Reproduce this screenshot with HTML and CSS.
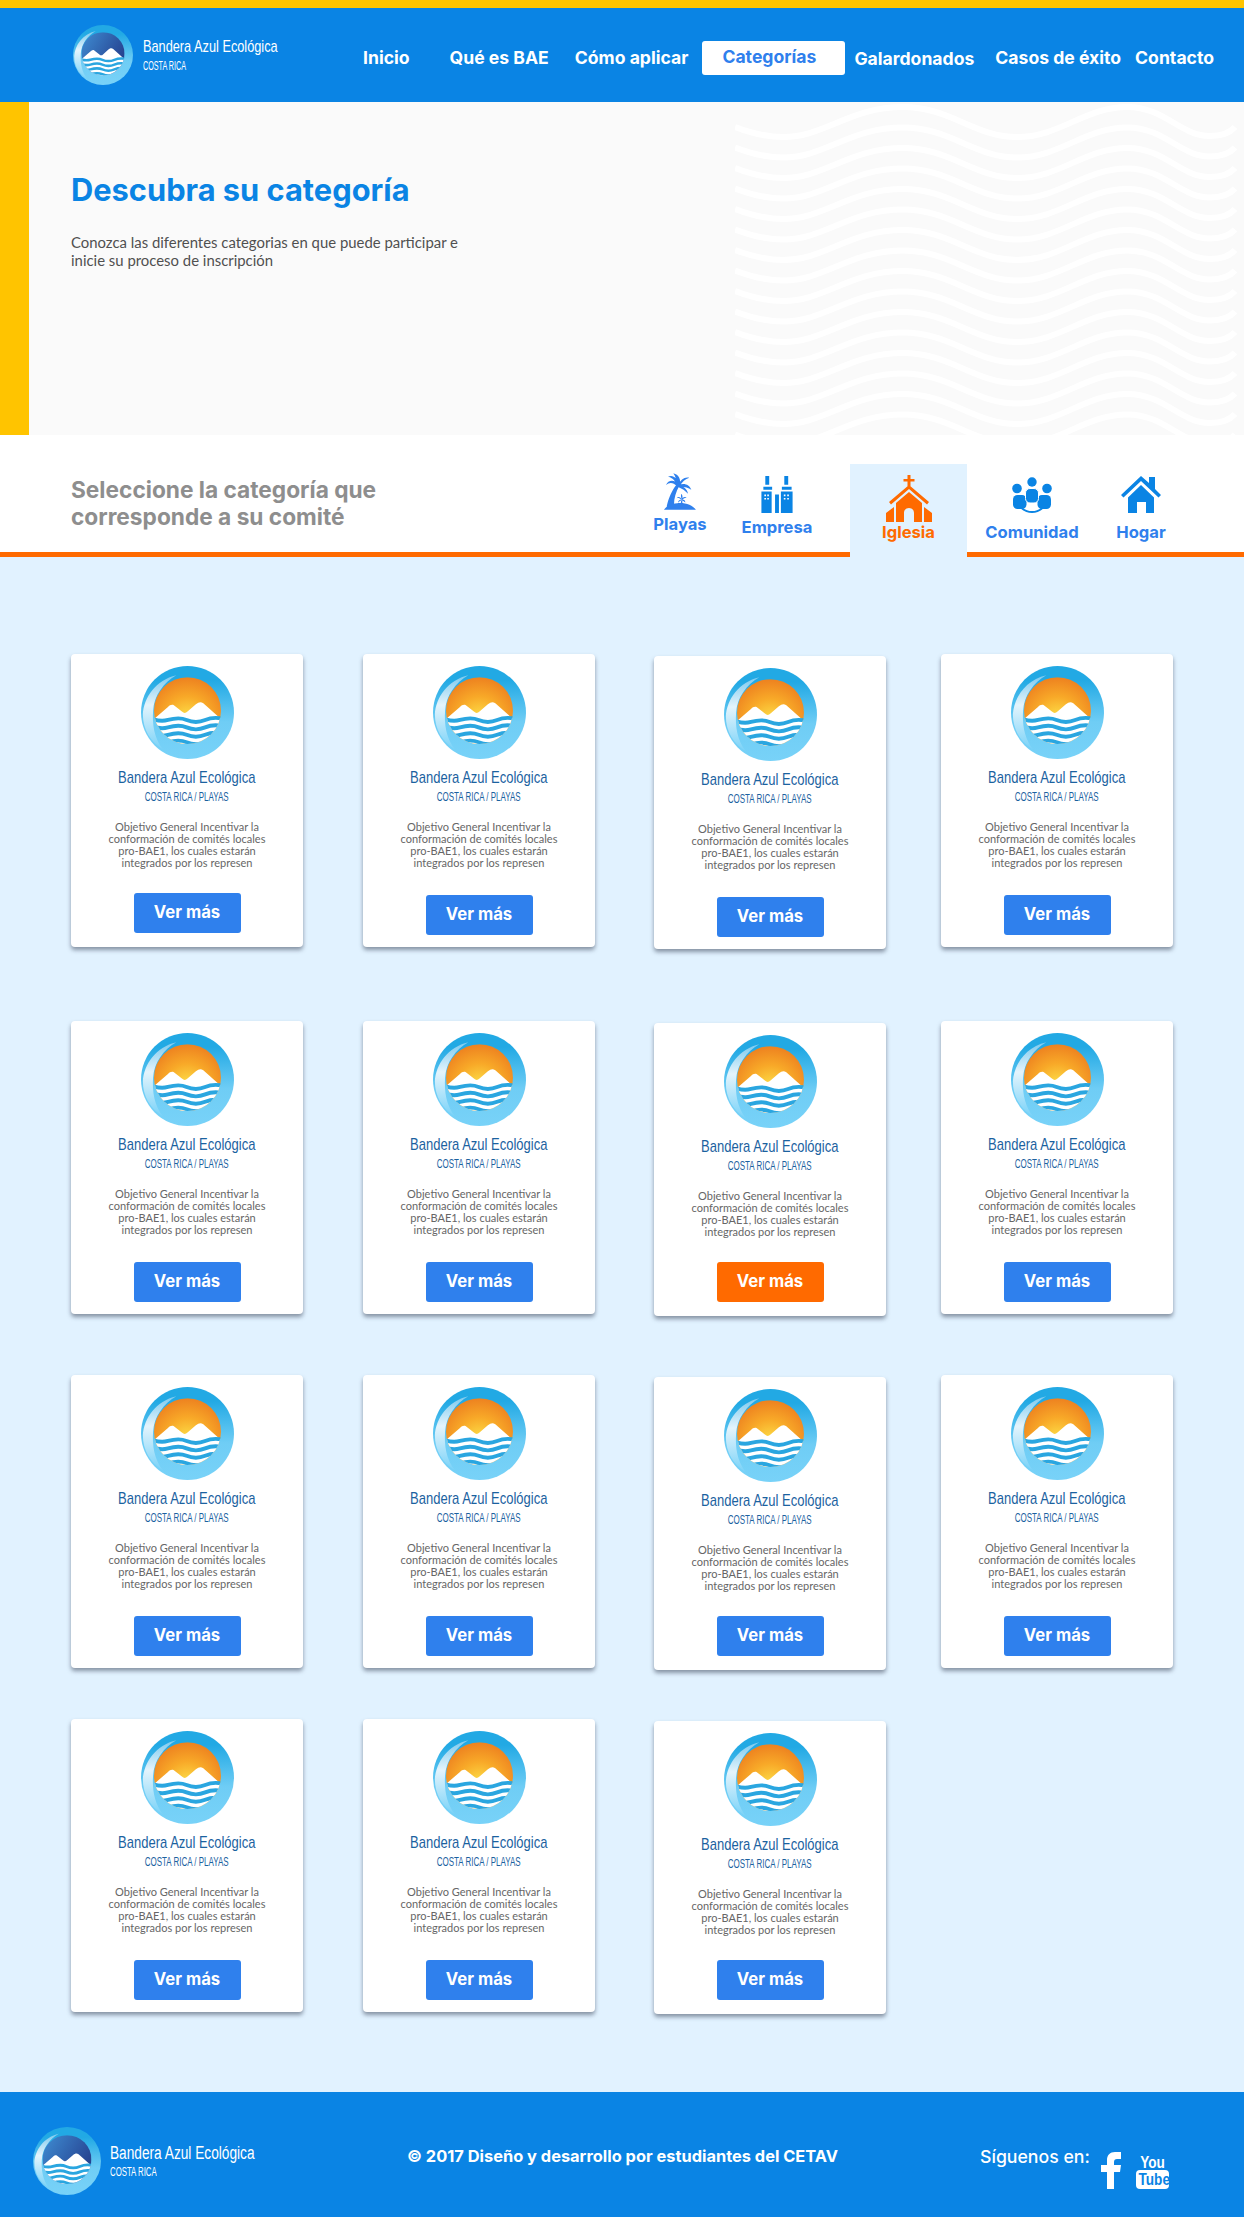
FILE: index.html
```html
<!DOCTYPE html>
<html lang="es">
<head>
    <meta charset="UTF-8">
    <meta name="viewport" content="width=device-width, initial-scale=1.0">
    <title>Categorías - Bandera Azul Ecológica</title>
    <link rel="stylesheet" href="styles.css">
</head>
<body>

    <!-- Simbolos que se repiten -->
    <svg class="defs" width="0" height="0" aria-hidden="true">
        <defs>
            <linearGradient id="ringGrad" x1="0" y1="0" x2="0" y2="1">
                <stop offset="0.15" stop-color="#22a9e4"/>
                <stop offset="0.6" stop-color="#6fcdf5"/>
                <stop offset="1" stop-color="#78d2f8"/>
            </linearGradient>
            <linearGradient id="glowGrad" x1="0" y1="0" x2="0" y2="1">
                <stop offset="0" stop-color="#7cc9ee"/>
                <stop offset="0.4" stop-color="#e4f4fc"/>
                <stop offset="1" stop-color="#78d2f8"/>
            </linearGradient>
            <radialGradient id="sunGrad" cx="0.5" cy="0.62" r="0.6">
                <stop offset="0" stop-color="#fde24a"/>
                <stop offset="0.55" stop-color="#f8a928"/>
                <stop offset="1" stop-color="#ee8420"/>
            </radialGradient>
            <linearGradient id="duskGrad" x1="0" y1="0" x2="1" y2="0.6">
                <stop offset="0" stop-color="#3f8ed4"/>
                <stop offset="1" stop-color="#253f8d"/>
            </linearGradient>
            <clipPath id="discClip">
                <circle cx="50" cy="48" r="36"/>
            </clipPath>

            <g id="markSea">
                <path d="M14 57 29 44c2-2 4-3 6-2l9 7c2 2 4 2 6 0l9-8c3-2 5-3 8-1l19 17v40H14z" fill="#fff"/>
                <g fill="none" stroke="#2aa6e0" stroke-width="4.200">
                    <path d="M10 56c7 3 12 4 19 2s13-3 20 0 13 3 20 0 13-3 21-1"/>
                    <path d="M10 64c7 3 12 4 19 2s13-3 20 0 13 3 20 0 13-3 21-1"/>
                    <path d="M10 72c7 3 12 4 19 2s13-3 20 0 13 3 20 0 13-3 21-1"/>
                    <path d="M10 80c7 3 12 4 19 2s13-3 20 0 13 3 20 0 13-3 21-1"/>
                </g>
            </g>

            <symbol id="markSun" viewBox="0 0 100 100">
                <circle cx="50" cy="50" r="50" fill="url(#ringGrad)"/>
                <path d="M38 10C16 15 3 34 2 52c0 16 8 30 22 38C14 78 12 62 13 48 14 32 24 18 38 10z" fill="url(#glowGrad)"/>
                <g clip-path="url(#discClip)">
                    <rect x="14" y="12" width="72" height="72" fill="url(#sunGrad)"/>
                    <use href="#markSea"/>
                </g>
            </symbol>

            <symbol id="markDusk" viewBox="0 0 100 100">
                <circle cx="50" cy="50" r="50" fill="url(#ringGrad)"/>
                <path d="M38 10C16 15 3 34 2 52c0 16 8 30 22 38C14 78 12 62 13 48 14 32 24 18 38 10z" fill="url(#glowGrad)"/>
                <g clip-path="url(#discClip)">
                    <rect x="14" y="12" width="72" height="72" fill="url(#duskGrad)"/>
                    <use href="#markSea"/>
                </g>
            </symbol>

            <path id="waveLine" d="M0 25C16 31 32 35 48 35 90 35 115 5 168 5 215 5 240 35 282 35 325 35 350 5 392 5 430 5 445 34 475 34 485 34 495 31 500 25" fill="none" stroke="#fff" stroke-width="6"/>
        </defs>
    </svg>

    <header class="topbar">
        <div class="brand brand-top">
            <svg class="brand-mark" viewBox="0 0 100 100"><use href="#markDusk"/></svg>
            <div class="brand-text">
                <span class="brand-name">Bandera Azul Ecológica</span>
                <span class="brand-sub">COSTA RICA</span>
            </div>
        </div>
        <nav class="menu">
            <a class="menu-item menu-inicio" href="#">Inicio</a>
            <a class="menu-item menu-que" href="#">Qué es BAE</a>
            <a class="menu-item menu-como" href="#">Cómo aplicar</a>
            <a class="menu-item menu-active" href="#">Categorías</a>
            <a class="menu-item menu-gal" href="#">Galardonados</a>
            <a class="menu-item menu-casos" href="#">Casos de éxito</a>
            <a class="menu-item" href="#">Contacto</a>
        </nav>
    </header>

    <section class="hero">
        <div class="hero-copy">
            <h1>Descubra su categoría</h1>
            <p>Conozca las diferentes categorias en que puede participar e inicie su proceso de inscripción</p>
        </div>
        <svg class="hero-waves" aria-hidden="true">
            <use href="#waveLine"/>
            <use href="#waveLine" y="20.5"/>
            <use href="#waveLine" y="41"/>
            <use href="#waveLine" y="61.5"/>
            <use href="#waveLine" y="82"/>
            <use href="#waveLine" y="102.5"/>
            <use href="#waveLine" y="123"/>
            <use href="#waveLine" y="143.5"/>
            <use href="#waveLine" y="164"/>
            <use href="#waveLine" y="184.5"/>
            <use href="#waveLine" y="205"/>
            <use href="#waveLine" y="225.5"/>
            <use href="#waveLine" y="246"/>
            <use href="#waveLine" y="266.5"/>
            <use href="#waveLine" y="287"/>
            <use href="#waveLine" y="307.5"/>
        </svg>
    </section>

    <section class="selector">
        <h2>Seleccione la categoría que corresponde a su comité</h2>
        <div class="tabs">
            <a class="tab tab-playas" href="#">
                <svg viewBox="0 0 96 110" width="32" height="37"><path fill="#2f80ed" d="M0 110C8 98 20 92 40 90 65 88 85 96 96 110zM8 100C14 72 24 52 36 36L46 38C36 55 30 75 30 95zM42 38C38 22 34 8 28 0 44 4 52 18 47 37zM40 38C32 20 22 12 12 11 26 3 42 16 45 36zM38 38C28 28 16 26 6 36 12 20 32 18 43 34zM42 36C50 20 62 10 76 14 64 18 54 26 47 39zM44 36C60 28 76 34 82 50 72 42 58 40 46 41zM44 38C58 38 70 48 72 62 64 52 54 46 44 42zM50 93 52 78 55 78 55 92zM53 78C48 70 42 70 38 75 44 74 48 75 52 80zM53 78C50 70 50 66 53 62 56 68 56 74 55 79zM53 78C58 70 64 70 68 74 62 74 58 76 55 80zM53 79C60 78 64 82 64 88 60 84 56 82 53 81zM53 79C46 79 42 84 42 89 46 84 50 82 54 81z"/></svg>
                <span>Playas</span>
            </a>
            <a class="tab tab-empresa" href="#">
                <svg viewBox="0 0 32 38" width="32" height="37"><path fill="#0a84e4" d="M4 0h4v9H4zM23.500 0h4v9h-4zM2 11h9v3H2zM21 11h10v3H21zM0 16h10.500v22H0zM14 19h4v19h-4zM20 16h12v22H20z"/><path fill="#fff" d="M3 19h1.700v1.700H3zM6 19h1.700v1.700H6zM3 22.500h1.700v1.700H3zM6 22.500h1.700v1.700H6zM23 19h1.700v1.700H23zM26.500 19h1.700v1.700h-1.700zM23 22.500h1.700v1.700H23zM26.500 22.500h1.700v1.700h-1.700z"/></svg>
                <span>Empresa</span>
            </a>
            <a class="tab tab-iglesia" href="#">
                <svg viewBox="0 0 46 47" width="46" height="47"><path fill="#ff6a00" d="M21.500 0h3v4h4v2.500h-4V12h-3V6.500h-4V4h4zM23 10 43 27 41 29.500 23 14 5 29.500 3 27zM23 17 36 28v19H28V38c0-3-2-5-5-5s-5 2-5 5v9H10V28zM0 38l8-6v15H0zM46 38l-8-6v15h8z"/></svg>
                <span>Iglesia</span>
            </a>
            <a class="tab tab-comunidad" href="#">
                <svg viewBox="0 0 40 36" width="40" height="36"><g fill="#0a84e4"><circle cx="20" cy="5" r="4.700"/><circle cx="5" cy="11.500" r="4.800"/><circle cx="35" cy="11.500" r="4.800"/><rect x="1" y="18" width="13.500" height="14" rx="4.500"/><rect x="25.500" y="18" width="13.500" height="14" rx="4.500"/><rect x="13.500" y="11.500" width="13" height="14.500" rx="4.500" stroke="#fff"/></g><path fill="none" stroke="#0a84e4" stroke-width="1.800" d="M10 31.500c3 2.500 6.500 3.500 10 3.500s7-1 10-3.500"/></svg>
                <span>Comunidad</span>
            </a>
            <a class="tab tab-hogar" href="#">
                <svg viewBox="0 0 40 37" width="40" height="37"><path fill="#0a84e4" d="M20 0 28 7V1h6v12l6 6-2.500 2.500L20 5 2.500 21.500 0 19zM20 9 33 21.500V37H25V26h-9v11H7V21.500z"/></svg>
                <span>Hogar</span>
            </a>
        </div>
    </section>

    <main class="catalog">
        <div class="card-row row-1">
            <article class="card"><svg class="card-mark" viewBox="0 0 100 100"><use href="#markSun"/></svg><div class="card-brand">Bandera Azul Ecológica</div><div class="card-sub">COSTA RICA / PLAYAS</div><p>Objetivo General Incentivar la conformación de comités locales pro-BAE1, los cuales estarán integrados por los represen</p><a class="btn btn-up" href="#">Ver más</a></article>
            <article class="card"><svg class="card-mark" viewBox="0 0 100 100"><use href="#markSun"/></svg><div class="card-brand">Bandera Azul Ecológica</div><div class="card-sub">COSTA RICA / PLAYAS</div><p>Objetivo General Incentivar la conformación de comités locales pro-BAE1, los cuales estarán integrados por los represen</p><a class="btn" href="#">Ver más</a></article>
            <article class="card card-low"><svg class="card-mark" viewBox="0 0 100 100"><use href="#markSun"/></svg><div class="card-brand">Bandera Azul Ecológica</div><div class="card-sub">COSTA RICA / PLAYAS</div><p>Objetivo General Incentivar la conformación de comités locales pro-BAE1, los cuales estarán integrados por los represen</p><a class="btn" href="#">Ver más</a></article>
            <article class="card card-last"><svg class="card-mark" viewBox="0 0 100 100"><use href="#markSun"/></svg><div class="card-brand">Bandera Azul Ecológica</div><div class="card-sub">COSTA RICA / PLAYAS</div><p>Objetivo General Incentivar la conformación de comités locales pro-BAE1, los cuales estarán integrados por los represen</p><a class="btn" href="#">Ver más</a></article>
        </div>
        <div class="card-row row-2">
            <article class="card"><svg class="card-mark" viewBox="0 0 100 100"><use href="#markSun"/></svg><div class="card-brand">Bandera Azul Ecológica</div><div class="card-sub">COSTA RICA / PLAYAS</div><p>Objetivo General Incentivar la conformación de comités locales pro-BAE1, los cuales estarán integrados por los represen</p><a class="btn" href="#">Ver más</a></article>
            <article class="card"><svg class="card-mark" viewBox="0 0 100 100"><use href="#markSun"/></svg><div class="card-brand">Bandera Azul Ecológica</div><div class="card-sub">COSTA RICA / PLAYAS</div><p>Objetivo General Incentivar la conformación de comités locales pro-BAE1, los cuales estarán integrados por los represen</p><a class="btn" href="#">Ver más</a></article>
            <article class="card card-low"><svg class="card-mark" viewBox="0 0 100 100"><use href="#markSun"/></svg><div class="card-brand">Bandera Azul Ecológica</div><div class="card-sub">COSTA RICA / PLAYAS</div><p>Objetivo General Incentivar la conformación de comités locales pro-BAE1, los cuales estarán integrados por los represen</p><a class="btn btn-up btn-hover" href="#">Ver más</a></article>
            <article class="card card-last"><svg class="card-mark" viewBox="0 0 100 100"><use href="#markSun"/></svg><div class="card-brand">Bandera Azul Ecológica</div><div class="card-sub">COSTA RICA / PLAYAS</div><p>Objetivo General Incentivar la conformación de comités locales pro-BAE1, los cuales estarán integrados por los represen</p><a class="btn" href="#">Ver más</a></article>
        </div>
        <div class="card-row row-3">
            <article class="card"><svg class="card-mark" viewBox="0 0 100 100"><use href="#markSun"/></svg><div class="card-brand">Bandera Azul Ecológica</div><div class="card-sub">COSTA RICA / PLAYAS</div><p>Objetivo General Incentivar la conformación de comités locales pro-BAE1, los cuales estarán integrados por los represen</p><a class="btn" href="#">Ver más</a></article>
            <article class="card"><svg class="card-mark" viewBox="0 0 100 100"><use href="#markSun"/></svg><div class="card-brand">Bandera Azul Ecológica</div><div class="card-sub">COSTA RICA / PLAYAS</div><p>Objetivo General Incentivar la conformación de comités locales pro-BAE1, los cuales estarán integrados por los represen</p><a class="btn" href="#">Ver más</a></article>
            <article class="card card-low"><svg class="card-mark" viewBox="0 0 100 100"><use href="#markSun"/></svg><div class="card-brand">Bandera Azul Ecológica</div><div class="card-sub">COSTA RICA / PLAYAS</div><p>Objetivo General Incentivar la conformación de comités locales pro-BAE1, los cuales estarán integrados por los represen</p><a class="btn btn-up" href="#">Ver más</a></article>
            <article class="card card-last"><svg class="card-mark" viewBox="0 0 100 100"><use href="#markSun"/></svg><div class="card-brand">Bandera Azul Ecológica</div><div class="card-sub">COSTA RICA / PLAYAS</div><p>Objetivo General Incentivar la conformación de comités locales pro-BAE1, los cuales estarán integrados por los represen</p><a class="btn" href="#">Ver más</a></article>
        </div>
        <div class="card-row row-4">
            <article class="card"><svg class="card-mark" viewBox="0 0 100 100"><use href="#markSun"/></svg><div class="card-brand">Bandera Azul Ecológica</div><div class="card-sub">COSTA RICA / PLAYAS</div><p>Objetivo General Incentivar la conformación de comités locales pro-BAE1, los cuales estarán integrados por los represen</p><a class="btn" href="#">Ver más</a></article>
            <article class="card"><svg class="card-mark" viewBox="0 0 100 100"><use href="#markSun"/></svg><div class="card-brand">Bandera Azul Ecológica</div><div class="card-sub">COSTA RICA / PLAYAS</div><p>Objetivo General Incentivar la conformación de comités locales pro-BAE1, los cuales estarán integrados por los represen</p><a class="btn" href="#">Ver más</a></article>
            <article class="card card-low"><svg class="card-mark" viewBox="0 0 100 100"><use href="#markSun"/></svg><div class="card-brand">Bandera Azul Ecológica</div><div class="card-sub">COSTA RICA / PLAYAS</div><p>Objetivo General Incentivar la conformación de comités locales pro-BAE1, los cuales estarán integrados por los represen</p><a class="btn btn-up" href="#">Ver más</a></article>
        </div>
    </main>

    <footer class="site-footer">
        <div class="brand brand-foot">
            <svg class="brand-mark" viewBox="0 0 100 100"><use href="#markDusk"/></svg>
            <div class="brand-text">
                <span class="brand-name">Bandera Azul Ecológica</span>
                <span class="brand-sub">COSTA RICA</span>
            </div>
        </div>
        <div class="copy">© 2017 Diseño y desarrollo por estudiantes del CETAV</div>
        <div class="social">
            <span class="social-label">Síguenos en:</span>
            <svg class="fb" viewBox="0 0 20 37" width="20" height="37"><path fill="#fff" d="M6 37V20H0v-7h6V8c0-5 3-8 8-8h6v7h-4c-2 0-3 1-3 3v3h7l-1 7h-6v17z"/></svg>
            <span class="yt"><span class="yt-you">You</span><span class="yt-tube"><span>Tube</span></span></span>
        </div>
    </footer>

</body>
</html>
```

FILE: styles.css
```css
* {
    box-sizing: border-box;
}
body {
    margin: 0;
    width: 1244px;
    font-family: "Inter", "Liberation Sans", sans-serif;
    background-color: #e1f2ff;
}
a {
    text-decoration: none;
}
.defs {
    display: block;
    height: 0;
}

/* Barra superior */
.topbar {
    height: 102px;
    border-top: 8px solid #ffc400;
    background-color: #0a84e4;
    display: flex;
    align-items: center;
    padding-left: 73px;
}
.brand {
    display: flex;
    align-items: center;
    color: #fff;
}
.brand-top {
    width: 290px;
    flex-shrink: 0;
}
.brand-top .brand-mark {
    width: 60px;
    height: 60px;
    margin-right: 10px;
}
.brand-text {
    display: flex;
    flex-direction: column;
    font-family: "Liberation Sans", sans-serif;
    white-space: nowrap;
}
.brand-name {
    font-size: 17px;
    line-height: 22px;
    transform: scaleX(0.75);
    transform-origin: left;
}
.brand-sub {
    font-size: 12px;
    line-height: 16px;
    transform: scaleX(0.6);
    transform-origin: left;
}
.menu {
    display: flex;
    align-items: center;
    padding-top: 4px;
}
.menu-item {
    color: #fff;
    font-size: 17.6px;
    font-weight: 700;
    white-space: nowrap;
    margin-right: 14px;
}
.menu-inicio {
    margin-right: 40px;
}
.menu-que {
    margin-right: 26px;
}
.menu-como {
    margin-right: 14px;
}
.menu-active {
    width: 143px;
    height: 34px;
    margin-top: 2px;
    line-height: 32px;
    padding-left: 20px;
    background-color: #fff;
    border-radius: 3px;
    color: #2f80ed;
    margin-right: 9px;
}
.menu-gal {
    margin-top: 2px;
    margin-right: 21px;
}

/* Hero */
.hero {
    height: 333px;
    display: flex;
    justify-content: space-between;
    border-left: 29px solid #ffc400;
    background-color: #fafafa;
    padding-right: 7px;
}
.hero-copy {
    padding: 69px 0 0 42px;
    width: 480px;
}
.hero h1 {
    margin: 0 0 24px;
    color: #0a84e4;
    font-size: 30.8px;
    line-height: 38px;
    font-weight: 700;
}
.hero p {
    margin: 0;
    width: 400px;
    color: #505050;
    font-family: "Lato", sans-serif;
    font-size: 14.9px;
    line-height: 18px;
}
.hero-waves {
    width: 502px;
    height: 333px;
}

/* Selector de categoria */
.selector {
    height: 122px;
    background-color: #fff;
    border-bottom: 5px solid #ff6a00;
    display: flex;
    justify-content: space-between;
    padding-left: 71px;
}
.selector h2 {
    width: 340px;
    margin: 41px 0 0;
    color: #8e8e8e;
    font-size: 22.7px;
    line-height: 27px;
    font-weight: 700;
}
.tabs {
    display: flex;
    height: 122px;
    margin-right: 73px;
}
.tab {
    display: flex;
    flex-direction: column;
    align-items: center;
    color: #2f80ed;
    font-size: 16.6px;
    font-weight: 700;
    line-height: 20px;
}
.tab svg {
    flex-shrink: 0;
}
.tab-playas {
    width: 60px;
    padding-top: 38px;
    margin-right: 30px;
}
.tab-playas span {
    margin-top: 4px;
}
.tab-empresa {
    width: 74px;
    padding-top: 41px;
    margin-right: 36px;
}
.tab-empresa span {
    margin-top: 4px;
}
.tab-iglesia {
    width: 117px;
    height: 93px;
    margin-top: 29px;
    padding-top: 11px;
    color: #ff6a00;
    background-color: #e1f2ff;
    margin-right: 15px;
}
.tab-comunidad {
    width: 100px;
    padding-top: 42px;
    margin-right: 29px;
}
.tab-comunidad span {
    margin-top: 9px;
}
.tab-hogar {
    width: 60px;
    padding-top: 41px;
}
.tab-hogar span {
    margin-top: 9px;
}

/* Tarjetas */
.catalog {
    height: 1535px;
    padding: 97px 0 0 71px;
}
.card-row {
    display: flex;
    align-items: flex-start;
    gap: 60px;
    height: 293px;
}
.row-2 {
    margin-top: 74px;
}
.row-3 {
    margin-top: 61px;
}
.row-4 {
    margin-top: 51px;
}
.card {
    width: 232px;
    height: 293px;
    background-color: #fff;
    border-radius: 4px;
    box-shadow: 0 3px 4px rgba(60, 70, 90, 0.55);
    display: flex;
    flex-direction: column;
    align-items: center;
    padding-top: 12px;
}
.card-low {
    margin-top: 2px;
    margin-left: -1px;
}
.card-last {
    margin-left: -5px;
}
.card-mark {
    width: 93px;
    height: 93px;
    flex-shrink: 0;
}
.card-brand {
    margin-top: 7px;
    color: #1b629f;
    font-family: "Liberation Sans", sans-serif;
    font-size: 17px;
    line-height: 24px;
    white-space: nowrap;
    transform: scaleX(0.765);
}
.card-sub {
    color: #1b629f;
    font-family: "Liberation Sans", sans-serif;
    font-size: 12.5px;
    line-height: 15px;
    white-space: nowrap;
    transform: scaleX(0.64);
}
.card p {
    width: 170px;
    height: 48px;
    margin: 16px 0 0;
    color: #666;
    font-family: "Lato", sans-serif;
    font-size: 11px;
    line-height: 12px;
    text-align: center;
}
.btn {
    display: block;
    width: 107px;
    height: 40px;
    margin-top: 26px;
    background-color: #2f80ed;
    border-radius: 3px;
    color: #fff;
    font-size: 16.7px;
    font-weight: 700;
    line-height: 38px;
    text-align: center;
}
.btn-up {
    margin-top: 24px;
}
.btn-hover {
    background-color: #ff6a00;
}

/* Pie */
.site-footer {
    height: 125px;
    background-color: #0a84e4;
    display: flex;
    color: #fff;
    padding-left: 33px;
}
.brand-foot {
    align-self: flex-start;
    width: 374px;
    flex-shrink: 0;
    margin-top: 35px;
}
.brand-foot .brand-mark {
    width: 68px;
    height: 68px;
    margin-right: 9px;
}
.brand-foot .brand-name {
    font-size: 18px;
    transform: scaleX(0.76);
}
.brand-foot .brand-sub {
    transform: scaleX(0.65);
}
.copy {
    width: 430px;
    margin-top: 54px;
    font-size: 16.4px;
    font-weight: 700;
    text-align: center;
    white-space: nowrap;
}
.social {
    display: flex;
    align-items: flex-start;
    margin-left: 143px;
    padding-top: 54px;
}
.social-label {
    width: 110px;
    font-size: 17.7px;
    font-weight: 500;
    white-space: nowrap;
    margin-right: 11px;
}
.fb {
    margin-top: 6px;
    margin-right: 15px;
}
.yt {
    display: flex;
    flex-direction: column;
    align-items: center;
    width: 33px;
    margin-top: 10px;
    font-family: "Liberation Sans", sans-serif;
    font-size: 16px;
    font-weight: 700;
}
.yt-you {
    line-height: 14px;
    transform: scaleX(0.85);
}
.yt-tube {
    width: 33px;
    height: 19px;
    background-color: #fff;
    color: #0a84e4;
    border-radius: 4px;
    line-height: 19px;
    text-align: center;
}
.yt-tube span {
    display: block;
    transform: scaleX(0.85);
}
```
